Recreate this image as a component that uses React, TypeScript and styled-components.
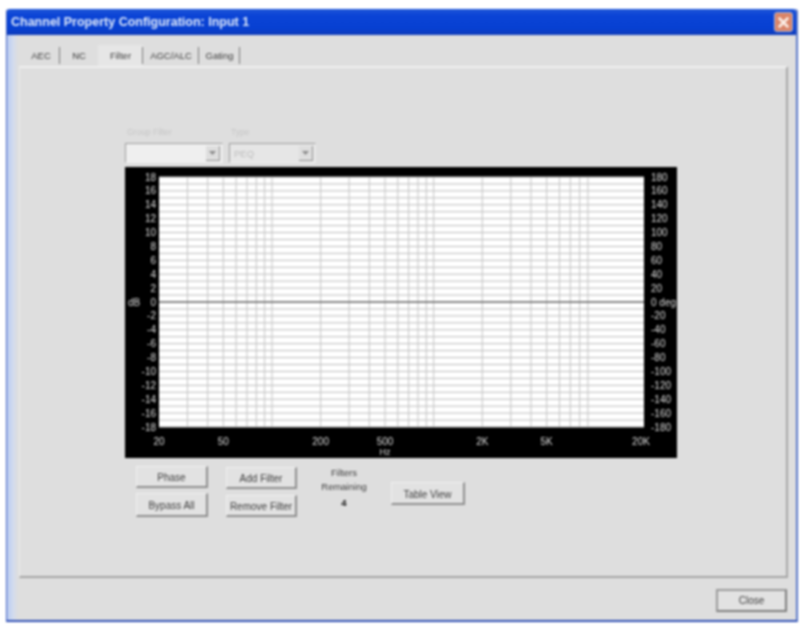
import React from "react";
import styled, { createGlobalStyle } from "styled-components";

const GlobalStyle = createGlobalStyle`
  html, body { margin: 0; padding: 0; background: #fff; }
  body { font-family: "Liberation Sans", Arial, sans-serif; }
`;

const Page = styled.div`
  width: 804px;
  height: 626px;
  padding: 9px 6px 4px;
  box-sizing: border-box;
  overflow: hidden;
  background: #fff;
`;

const Dialog = styled.div`
  width: 792px;
  height: 613px;
  display: flex;
  flex-direction: column;
  box-sizing: border-box;
  filter: blur(0.85px);
  border-left: 1px solid #3f5fc0;
  border-right: 2px solid #5a78c8;
  border-bottom: 2px solid #2f4fb4;
  border-radius: 3px 3px 0 0;
  background: #dedede;
`;

const TitleBar = styled.div`
  height: 26px;
  flex: none;
  display: flex;
  align-items: center;
  justify-content: space-between;
  padding: 0 3px 0 4px;
  background: linear-gradient(180deg, #1f56d8 0%, #0b44d6 25%, #0740d2 75%, #0f3cb8 100%);
  border-radius: 3px 3px 0 0;
`;

const Title = styled.span`
  color: #dfe9fa;
  font-size: 12.5px;
  font-weight: 700;
`;

const CloseBox = styled.div`
  width: 19px;
  height: 20px;
  display: flex;
  align-items: center;
  justify-content: center;
  border-radius: 3px;
  background: #d98468;
  border: 1px solid #a9b6d8;
  box-sizing: border-box;
`;

const Body = styled.div`
  flex: 1;
  display: flex;
  flex-direction: column;
  padding: 10px 9px 8px 12px;
  background: linear-gradient(90deg, #b9cbf2 0, #d2dbee 6px, #dedede 11px);
`;

const TabStrip = styled.div`
  height: 21px;
  flex: none;
  display: flex;
  padding-left: 3px;
`;

const Tab = styled.div<{ $w: number; $active?: boolean; $sep?: boolean }>`
  width: ${(p) => p.$w}px;
  display: flex;
  align-items: center;
  justify-content: center;
  box-sizing: border-box;
  font-size: 9.5px;
  color: #3c3c3c;
  background: ${(p) => (p.$active ? "#e6e6e6" : "transparent")};
  position: relative;
  &::after {
    content: "";
    display: ${(p) => (p.$sep ? "block" : "none")};
    position: absolute;
    right: 0;
    top: 2px;
    height: 17px;
    width: 1px;
    background: #777;
  }
`;

const Panel = styled.div`
  width: 769px;
  height: 512px;
  flex: none;
  box-sizing: border-box;
  padding: 59px 0 0 105px;
  background: #dedede;
  border-top: 2px solid #efefef;
  border-left: 1px solid #ececec;
  border-right: 2px solid #a8a8a8;
  border-bottom: 2px solid #a4a4a4;
`;

const ControlRow = styled.div`
  display: flex;
  gap: 6px;
  height: 36px;
  margin-bottom: 4px;
`;

const Field = styled.div<{ $w: number }>`
  width: ${(p) => p.$w}px;
  display: flex;
  flex-direction: column;
`;

const FieldLabel = styled.div`
  height: 16px;
  font-size: 8.5px;
  color: #c6c6c6;
  line-height: 11px;
  padding-left: 2px;
`;

const Combo = styled.div<{ $fill: string }>`
  height: 20px;
  box-sizing: border-box;
  display: flex;
  align-items: center;
  justify-content: space-between;
  padding: 0 2px 0 4px;
  font-size: 9.5px;
  color: #bcbcbc;
  background: ${(p) => p.$fill};
  border: 1px solid #9c9c9c;
  border-right-color: #e8e8e8;
  border-bottom-color: #f2f2f2;
`;

const ComboArrow = styled.div`
  width: 13px;
  height: 14px;
  display: flex;
  align-items: center;
  justify-content: center;
  background: #dedede;
  border-right: 1px solid #909090;
  border-bottom: 1px solid #909090;
`;

const ChartSvg = styled.svg`
  display: block;
  width: 552px;
  height: 291px;
  font-family: "Liberation Sans", Arial, sans-serif;
`;

const ActionRow = styled.div`
  display: flex;
  margin: 8px 0 0 11px;
`;

const ButtonColumn = styled.div<{ $gap: number; $w: number; $mr: number; $top?: number }>`
  display: flex;
  flex-direction: column;
  gap: ${(p) => p.$gap}px;
  width: ${(p) => p.$w}px;
  margin-right: ${(p) => p.$mr}px;
  padding-top: ${(p) => p.$top ?? 0}px;
`;

const WinButton = styled.div<{ $w?: number; $h: number; $top?: number }>`
  width: ${(p) => (p.$w ? `${p.$w}px` : "100%")};
  height: ${(p) => p.$h}px;
  margin-top: ${(p) => p.$top ?? 0}px;
  padding-top: 2px;
  box-sizing: border-box;
  flex: none;
  display: flex;
  align-items: center;
  justify-content: center;
  font-size: 10px;
  color: #3c3c3c;
  background: #e2e2e2;
  border-top: 1px solid #f0f0f0;
  border-left: 1px solid #f0f0f0;
  border-right: 2px solid #8e8e8e;
  border-bottom: 2px solid #8e8e8e;
`;

const Remaining = styled.div`
  width: 80px;
  margin-right: 7px;
  text-align: center;
  font-size: 9.5px;
  line-height: 14px;
  color: #3c3c3c;
`;

const RemainingValue = styled.div`
  margin-top: 2px;
  font-weight: 700;
  color: #111;
`;

const Footer = styled.div`
  display: flex;
  justify-content: flex-end;
  padding: 11px 0 0 0;
`;

const CloseButton = styled.div`
  width: 71px;
  height: 23px;
  box-sizing: border-box;
  display: flex;
  align-items: center;
  justify-content: center;
  font-size: 10px;
  color: #3c3c3c;
  background: #e2e2e2;
  border: 2px solid #7e7e7e;
  border-top-color: #9a9a9a;
  border-left-color: #9a9a9a;
`;

const PX = 34;
const PY = 10;
const PW = 485;
const PH = 250;

const freqX = (f: number) => PX + (Math.log10(f / 20) / 3) * PW;
const freqs: number[] = [];
[10, 100, 1000].forEach((d) => {
  for (let i = 1; i < 10; i++) {
    const f = d * i;
    if (f > 20 && f < 20000) freqs.push(f);
  }
});
const dbY = (db: number) => PY + ((18 - db) / 36) * PH;
const dbSteps = Array.from({ length: 37 }, (_, i) => 18 - i);
const labelSteps = Array.from({ length: 19 }, (_, i) => 18 - i * 2);
const xLabels: [string, number][] = [
  ["20", 20],
  ["50", 50],
  ["200", 200],
  ["500", 500],
  ["2K", 2000],
  ["5K", 5000],
  ["20K", 20000],
];

function ResponseChart() {
  return (
    <ChartSvg viewBox="0 0 552 291">
      <rect width="552" height="291" fill="#000" />
      <rect x={PX} y={PY} width={PW} height={PH} fill="#fff" />
      {dbSteps.map((d) => (
        <line key={d} x1={PX} x2={PX + PW} y1={dbY(d)} y2={dbY(d)} stroke="#bcbcbc" strokeWidth="1" />
      ))}
      {freqs.map((f) => (
        <line key={f} x1={freqX(f)} x2={freqX(f)} y1={PY} y2={PY + PH} stroke="#c4c4c4" strokeWidth="1" />
      ))}
      <line x1={PX} x2={PX + PW} y1={dbY(0)} y2={dbY(0)} stroke="#333" strokeWidth="1.2" />
      <g fill="#dcdcdc" fontSize="10">
        {labelSteps.map((d) => (
          <text key={d} x={PX - 3} y={dbY(d) + 3.5} textAnchor="end">{d}</text>
        ))}
        {labelSteps.map((d) => (
          <text key={d} x={PX + PW + 7} y={dbY(d) + 3.5}>{d === 0 ? "0 deg" : d * 10}</text>
        ))}
        <text x="3" y={dbY(0) + 3.5}>dB</text>
        {xLabels.map(([t, f]) => (
          <text key={t} x={freqX(f) - (t === "20K" ? 3 : 0)} y="278" textAnchor="middle">{t}</text>
        ))}
        <text x={freqX(500)} y="288" textAnchor="middle" fontSize="9">Hz</text>
      </g>
    </ChartSvg>
  );
}

export default function App() {
  return (
    <>
      <GlobalStyle />
      <Page>
        <Dialog>
          <TitleBar>
            <Title>Channel Property Configuration: Input 1</Title>
            <CloseBox>
              <svg width="13" height="13" viewBox="0 0 13 13">
                <path d="M2.5 2.5 L10.5 10.5 M10.5 2.5 L2.5 10.5" stroke="#fbeee6" strokeWidth="2.6" strokeLinecap="round" />
              </svg>
            </CloseBox>
          </TitleBar>
          <Body>
            <TabStrip>
              <Tab $w={38} $sep>AEC</Tab>
              <Tab $w={38}>NC</Tab>
              <Tab $w={45} $active $sep>Filter</Tab>
              <Tab $w={56} $sep>AGC/ALC</Tab>
              <Tab $w={41} $sep>Gating</Tab>
            </TabStrip>
            <Panel>
              <ControlRow>
                <Field $w={98}>
                  <FieldLabel>Group Filter</FieldLabel>
                  <Combo $fill="#efefef">
                    <span />
                    <ComboArrow>
                      <svg width="7" height="4" viewBox="0 0 7 4"><path d="M0 0h7L3.5 4z" fill="#8a8a8a" /></svg>
                    </ComboArrow>
                  </Combo>
                </Field>
                <Field $w={87}>
                  <FieldLabel>Type</FieldLabel>
                  <Combo $fill="#e6e6e6">
                    <span>PEQ</span>
                    <ComboArrow>
                      <svg width="7" height="4" viewBox="0 0 7 4"><path d="M0 0h7L3.5 4z" fill="#8a8a8a" /></svg>
                    </ComboArrow>
                  </Combo>
                </Field>
              </ControlRow>
              <ResponseChart />
              <ActionRow>
                <ButtonColumn $gap={5} $w={72} $mr={18}>
                  <WinButton $h={22}>Phase</WinButton>
                  <WinButton $h={24}>Bypass All</WinButton>
                </ButtonColumn>
                <ButtonColumn $gap={6} $w={71} $mr={7} $top={1}>
                  <WinButton $h={22}>Add Filter</WinButton>
                  <WinButton $h={22}>Remove Filter</WinButton>
                </ButtonColumn>
                <Remaining>
                  Filters
                  <br />
                  Remaining
                  <RemainingValue>4</RemainingValue>
                </Remaining>
                <WinButton $w={74} $h={23} $top={16}>Table View</WinButton>
              </ActionRow>
            </Panel>
            <Footer>
              <CloseButton>Close</CloseButton>
            </Footer>
          </Body>
        </Dialog>
      </Page>
    </>
  );
}
